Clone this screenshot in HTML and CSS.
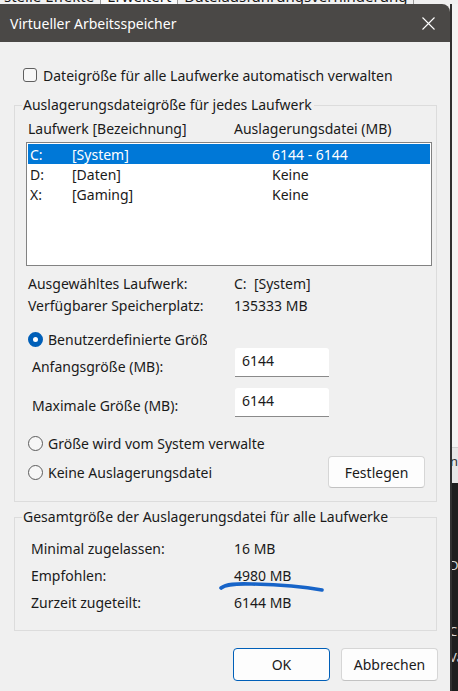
FILE: index.html
```html
<!DOCTYPE html>
<html lang="de">
<head>
<meta charset="utf-8">
<title>Virtueller Arbeitsspeicher</title>
<link rel="stylesheet" href="styles.css">
</head>
<body>
<div class="screen">
  <div class="tabs">
    <span class="tab t1">stelle Effekte</span>
    <span class="tab t2">Erweitert</span>
    <span class="tab t3">Dateiausführungsverhinderung</span>
  </div>
  <div class="main">
    <div class="dialog">
      <div class="titlebar">
        <span class="title">Virtueller Arbeitsspeicher</span>
        <svg class="close" width="13" height="13" viewBox="0 0 13 13"><path d="M0.5 0.5 L12.5 12.5 M12.5 0.5 L0.5 12.5" stroke="#fff" stroke-width="1.1" fill="none"/></svg>
      </div>
      <div class="body">
        <div class="check-row"><span class="checkbox"></span><span>Dateigröße für alle Laufwerke automatisch verwalten</span></div>

        <fieldset class="group g1">
          <legend>Auslagerungsdateigröße für jedes Laufwerk</legend>
          <div class="list-head"><span class="h1">Laufwerk [Bezeichnung]</span><span>Auslagerungsdatei (MB)</span></div>
          <div class="listbox">
            <div class="lrow sel"><span class="c1">C:</span><span class="c2">[System]</span><span>6144 - 6144</span></div>
            <div class="lrow"><span class="c1">D:</span><span class="c2">[Daten]</span><span>Keine</span></div>
            <div class="lrow"><span class="c1">X:</span><span class="c2">[Gaming]</span><span>Keine</span></div>
          </div>
          <div class="info">
            <span>Ausgewähltes Laufwerk:</span><span>C:&nbsp; [System]</span>
            <span>Verfügbarer Speicherplatz:</span><span>135333 MB</span>
          </div>
          <div class="radio-row r1"><span class="radio on"></span><span class="clip c-custom">Benutzerdefinierte Größe</span></div>
          <div class="field f1"><span class="flabel">Anfangsgröße (MB):</span><div class="input">6144</div></div>
          <div class="field f2"><span class="flabel">Maximale Größe (MB):</span><div class="input">6144</div></div>
          <div class="radio-row r2"><span class="radio"></span><span class="clip c-sys">Größe wird vom System verwaltet</span></div>
          <div class="radio-row r3"><span class="radio"></span><span class="grow">Keine Auslagerungsdatei</span><span class="btn set">Festlegen</span></div>
        </fieldset>

        <fieldset class="group g2">
          <legend>Gesamtgröße der Auslagerungsdatei für alle Laufwerke</legend>
          <div class="totals">
            <span>Minimal zugelassen:</span><span>16 MB</span>
            <span>Empfohlen:</span><span>4980 MB</span>
            <span>Zurzeit zugeteilt:</span><span>6144 MB</span>
          </div>
        </fieldset>

        <div class="buttons">
          <span class="btn primary">OK</span>
          <span class="btn">Abbrechen</span>
        </div>
      </div>
    </div>
    <div class="side">
      <div class="side-light"><div class="side-lower"><span>n</span></div></div>
      <div class="side-dark">
        <span class="frag fd">D</span>
        <span class="frag fc">C</span>
        <span class="frag fv">Va</span>
      </div>
    </div>
  </div>
  <svg class="mark" width="458" height="691" viewBox="0 0 458 691"><path d="M221 588 C 226 584, 236 583.5, 252 584 C 275 584.5, 300 586, 322 590" stroke="#1764c8" stroke-width="3.6" stroke-linecap="round" fill="none"/></svg>
</div>
</body>
</html>
```
FILE: styles.css
```css
html, body {
  margin: 0;
  padding: 0;
}
body {
  width: 458px;
  height: 691px;
  overflow: hidden;
  background: #f0f0f0;
  font-family: "Noto Sans", "Open Sans", sans-serif;
  font-size: 14px;
  color: #1a1a1a;
}
.screen {
  position: relative;
  width: 458px;
  height: 691px;
  overflow: hidden;
  display: flex;
  flex-direction: column;
}
.tabs {
  height: 4px;
  overflow: hidden;
  display: flex;
  background: #f0f0f0;
  flex: none;
}
.tab {
  font-size: 15px;
  line-height: 20px;
  margin-top: -14px;
  padding: 0 6px;
  border-right: 1px solid #9a9a9a;
  white-space: nowrap;
}
.t1 { padding-left: 4px; }
.t2 { background: #fafafa; }
.main {
  flex: 1;
  display: flex;
}
.dialog {
  width: 450px;
  flex: none;
  display: flex;
  flex-direction: column;
  background: #f0f0f0;
  border-top-right-radius: 8px;
  overflow: hidden;
}
.titlebar {
  height: 38px;
  background: #4a4846;
  display: flex;
  align-items: center;
  justify-content: space-between;
  padding: 0 15px 0 10px;
  flex: none;
}
.title {
  color: #fff;
  font-size: 14px;
  line-height: 20px;
  margin-top: 1px;
}
.close { display: block; }
.body {
  flex: 1;
  padding: 23px 13px 0 14px;
  display: flex;
  flex-direction: column;
}
.check-row {
  height: 20px;
  display: flex;
  align-items: center;
  gap: 6px;
  padding-left: 9px;
}
.checkbox {
  width: 12px;
  height: 12px;
  border: 1px solid #5f5f5f;
  border-radius: 3px;
  background: #f7f7f7;
}
.group {
  margin: 0;
  padding: 0;
  min-width: 0;
  border: 1px solid #dcdcdc;
}
.group legend {
  line-height: 20px;
  padding: 0 2px 0 1px;
  margin-left: 7px;
}
.g1 {
  margin-top: 10px;
  padding: 3px 0 13px 0;
}
.list-head {
  height: 20px;
  display: flex;
  align-items: center;
  padding-left: 13px;
}
.list-head .h1 { width: 206px; }
.listbox {
  margin: 4px 4px 0 11px;
  height: 120px;
  border: 1px solid #828282;
  background: #fff;
  padding: 1px;
}
.lrow {
  height: 20px;
  display: flex;
  align-items: center;
  padding-left: 2px;
}
.lrow.sel { background: #0078d7; color: #fff; }
.lrow .c1 { width: 42px; }
.lrow .c2 { width: 200px; }
.info {
  margin-top: 6px;
  display: grid;
  grid-template-columns: 206px 1fr;
  grid-auto-rows: 22px;
  align-items: center;
  padding-left: 13px;
}
.radio-row {
  display: flex;
  align-items: center;
  gap: 5px;
  padding-left: 13px;
}
.radio {
  width: 13px;
  height: 13px;
  border: 1px solid #5c5c5c;
  border-radius: 50%;
  box-sizing: content-box;
  flex: none;
  background: #f7f7f7;
}
.radio.on {
  width: 5px;
  height: 5px;
  border: 5px solid #005fb8;
  background: #fff;
}
.clip {
  overflow: hidden;
  white-space: nowrap;
}
.c-custom { width: 159px; }
.c-sys { width: 217px; }
.r1 { height: 20px; margin-top: 13px; }
.field {
  display: flex;
  align-items: flex-start;
  padding-left: 17px;
  height: 29px;
}
.f1 { margin-top: -1px; }
.f2 { margin-top: 11px; }
.flabel {
  width: 203px;
  line-height: 20px;
  padding-top: 9px;
}
.f2 .flabel { padding-top: 8px; }
.input {
  width: 87px;
  height: 28px;
  background: #fff;
  border-bottom: 1px solid #8a8a8a;
  border-radius: 3px 3px 0 0;
  padding-left: 7px;
  line-height: 26px;
  font-size: 14px;
}
.r2 { height: 20px; margin-top: 16px; }
.r3 { height: 32px; margin-top: 3px; padding-right: 11px; }
.grow { flex: 1; }
.btn {
  box-sizing: border-box;
  display: flex;
  align-items: center;
  justify-content: center;
  background: #fdfdfd;
  border: 1px solid #d6d6d6;
  border-bottom-color: #c2c2c2;
  border-radius: 4px;
  height: 32px;
  width: 97px;
}
.set { width: 97px; }
.g2 {
  margin-top: 5px;
  padding: 8px 0 14px 0;
}
.totals {
  display: grid;
  grid-template-columns: 203px 1fr;
  grid-auto-rows: 27px;
  align-items: center;
  padding-left: 16px;
}
.buttons {
  margin-top: 17px;
  display: flex;
  justify-content: flex-end;
  gap: 11px;
  margin-right: -1px;
}
.buttons .btn { height: 33px; width: 97px; }
.primary { border: 1px solid #005fb8; }
.side {
  flex: 1;
  display: flex;
  flex-direction: column;
  border-left: 2px solid #303030;
}
.side-light {
  height: 479px;
  background: #f3f3f3;
  display: flex;
  flex-direction: column;
  justify-content: flex-end;
  overflow: hidden;
}
.side-lower {
  height: 35px;
  background: #e6e6e6;
  border-top: 1px solid #d0d0d0;
  overflow: hidden;
}
.side-lower span {
  display: block;
  font-size: 13px;
  margin-left: -2px;
  line-height: 16px;
  margin-top: 5px;
  color: #333;
}
.side-dark {
  flex: 1;
  background: #1e1e1e;
  display: flex;
  flex-direction: column;
  overflow: hidden;
  color: #d8d8d8;
  font-size: 13px;
  line-height: 16px;
}
.frag { display: block; margin-left: -3px; }
.fd { margin-top: 74px; }
.fc { margin-top: 50px; }
.fv { margin-top: 10px; }
.mark {
  position: absolute;
  left: 0;
  top: 0;
  pointer-events: none;
}
```
